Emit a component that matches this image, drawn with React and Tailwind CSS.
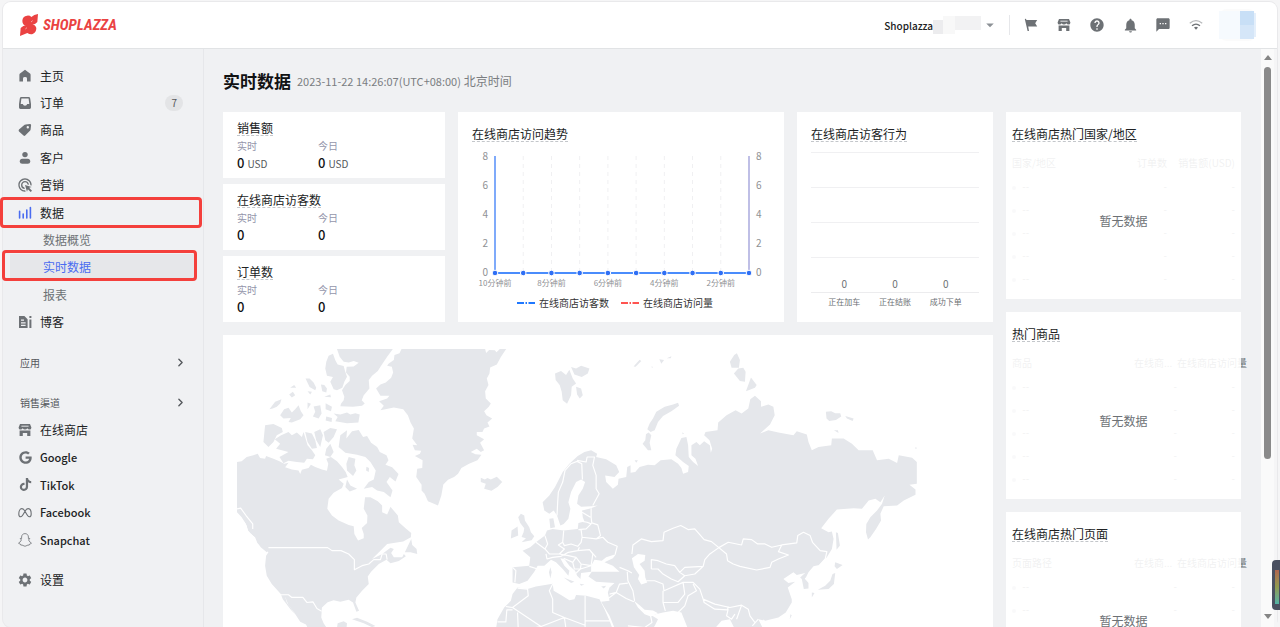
import { ChevronRight } from "lucide-react";
import { FaGoogle, FaTiktok } from "react-icons/fa";
import { MdAdsClick, MdArrowDropDown, MdHelp, MdNotifications, MdSettings, MdSms } from "react-icons/md";

function HomeIcon() {
  return (
    <svg viewBox="0 0 14 14" className="w-3.5 h-3.5" fill="currentColor">
      <path d="M7 .8 12 4.6Q12.6 5 12.6 6V12.6H9V9.4Q9 8 7 8T5 9.4V12.6H1.4V6Q1.4 5 2 4.6Z" />
    </svg>
  );
}

function InboxIcon() {
  return (
    <svg viewBox="0 0 14 14" className="w-3.5 h-3.5" fill="currentColor">
      <path fillRule="evenodd" d="M3.4 1H10.6Q12 1 12.2 2.4L13 8V11.6Q13 13 11.6 13H2.4Q1 13 1 11.6V8L1.8 2.4Q2 1 3.4 1ZM3.4 2.4 2.7 8H4.8Q5.2 9.8 7 9.8T9.2 8H11.3L10.6 2.4Z" />
    </svg>
  );
}

function TagIcon() {
  return (
    <svg viewBox="0 0 14 14" className="w-3.5 h-3.5" fill="currentColor">
      <path fillRule="evenodd" d="M7.6 1.4 11.9 1Q13.2 1 13.1 2.3L12.6 6.6Q12.5 7 12.2 7.4L7.2 12.6Q6.4 13.4 5.5 12.6L1 8.4Q.2 7.5 1 6.6L6.6 1.8Q7 1.5 7.6 1.4ZM9.8 3.1A1.2 1.2 0 1 0 9.8 5.5 1.2 1.2 0 1 0 9.8 3.1Z" />
    </svg>
  );
}

function PersonIcon() {
  return (
    <svg viewBox="0 0 14 14" className="w-3.5 h-3.5" fill="currentColor">
      <circle cx="7" cy="3.6" r="2.7" />
      <rect x="1.8" y="7.8" width="10.4" height="5" rx="2.5" />
    </svg>
  );
}

function DataIcon() {
  return (
    <svg viewBox="0 0 14 14" className="w-3.5 h-3.5" stroke="#4a6cf0" strokeWidth="1.6" strokeLinecap="round">
      <path d="M1.6 5.2V12M5.2 8V12M8.8 4V12M12.4 1.6V12" />
    </svg>
  );
}

function BlogIcon() {
  return (
    <svg viewBox="0 0 14 14" className="w-3.5 h-3.5" fill="currentColor">
      <path fillRule="evenodd" d="M1 1H6.4L9.6 4.2V13H1ZM3 4.6V5.8H6V4.6ZM3 7.2V8.4H7.6V7.2ZM3 9.8V11H7.6V9.8Z" />
      <path d="M11.4 1H13.4V3H11.4ZM11.4 4.4H13.4V13H11.4Z" />
    </svg>
  );
}

function StoreIcon() {
  return (
    <svg viewBox="0 0 14 14" className="w-3.5 h-3.5" fill="currentColor">
      <path d="M2 1H12L13.4 4.4Q13.4 6.6 11.5 6.6 10 6.6 9.3 5.2 8.6 6.6 7 6.6T4.7 5.2Q4 6.6 2.5 6.6 .6 6.6 .6 4.4Z" />
      <path d="M1.6 7.4H4.6L9.2 7.4H12.4V13H9.2V10H4.8V13H1.6Z" />
      <path d="M3.4 3.2H10.6" stroke="#f0f1f3" strokeWidth=".9" />
    </svg>
  );
}

function MetaIcon() {
  return (
    <svg viewBox="0 0 14 14" className="w-3.5 h-3.5" fill="none" stroke="currentColor" strokeWidth="1.1">
      <path d="M7 5.2C6 3.4 5 2.6 3.8 2.6 2 2.6 .8 5.2 .8 8 .8 9.8 1.5 10.8 2.7 10.8 4 10.8 4.8 9.4 7 5.2 8 3.4 9 2.6 10.2 2.6 12 2.6 13.2 5.2 13.2 8 13.2 9.8 12.5 10.8 11.3 10.8 10 10.8 9.2 9.4 7 5.2Z" />
    </svg>
  );
}

function SnapIcon() {
  return (
    <svg viewBox="0 0 14 14" className="w-3.5 h-3.5" fill="none" stroke="currentColor" strokeWidth=".8" strokeLinejoin="round">
      <path d="M7 .6C9 .6 10.4 2 10.4 4V5.6L11.8 5.4 10.6 7Q11.4 9.2 13.5 10 13 11 11.6 11.1L11.2 12.1Q9.8 11.8 9 12.5 7 14 5 12.5 4.2 11.8 2.8 12.1L2.4 11.1Q1 11 .5 10 2.6 9.2 3.4 7L2.2 5.4 3.6 5.6V4C3.6 2 5 .6 7 .6Z" />
    </svg>
  );
}

function FlagIcon() {
  return (
    <svg viewBox="0 0 14 14" className="w-3.5 h-3.5" fill="currentColor">
      <path d="M.8 1 2 .8 2.4 2H13.2L11.2 5.2 13.2 8.6H4.2L5 13H3.6Z" />
    </svg>
  );
}

function WifiIcon() {
  return (
    <svg viewBox="0 0 14 14" className="w-3.5 h-3.5" fill="none" stroke="currentColor" strokeWidth="1.3">
      <path d="M.8 5.2Q7 0 13.2 5.2" opacity=".5" />
      <path d="M3 7.8Q7 4.4 11 7.8" />
      <path d="M5 9.6Q7 8 9 9.6L7 11.8Z" fill="currentColor" stroke="none" />
    </svg>
  );
}

function Logo() {
  return (
    <a href="#" className="flex items-center gap-[5px] text-[#ea4242]">
      <svg viewBox="0 0 54 66" className="h-[22px] w-[18px]" fill="currentColor">
        <path d="M54 0 52 24 46 29Q41 32 36 30 47 33 49 42 49 56 38 60 30 62 22 57L0 66 2 42 10 36Q15 34 19 36 7 33 7 20 8 6 21 5 30 4 34 9L43 3Z" />
        <path d="M33 24 38 20M16 45 21 41" stroke="#fff" strokeWidth="1.5" />
      </svg>
      <span className="font-['Roboto_Condensed','Roboto','Liberation_Sans',sans-serif] text-[15px] leading-5 font-bold italic">SHOPLAZZA</span>
    </a>
  );
}

const mainMenu = [
  { label: "主页", icon: <HomeIcon /> },
  { label: "订单", icon: <InboxIcon />, badge: 7 },
  { label: "商品", icon: <TagIcon /> },
  { label: "客户", icon: <PersonIcon /> },
  { label: "营销", icon: <MdAdsClick size={16} className="shrink-0" /> },
  { label: "数据", icon: <DataIcon />, marked: true },
  { label: "数据概览", sub: true },
  { label: "实时数据", sub: true, active: true },
  { label: "报表", sub: true },
  { label: "博客", icon: <BlogIcon /> },
];

const channels = [
  { label: "在线商店", icon: <StoreIcon /> },
  { label: "Google", icon: <FaGoogle size={13} />, latin: true },
  { label: "TikTok", icon: <FaTiktok size={13} />, latin: true },
  { label: "Facebook", icon: <MetaIcon />, latin: true },
  { label: "Snapchat", icon: <SnapIcon />, latin: true },
];

function MenuItem({ item }) {
  if (item.sub) {
    return (
      <li className="relative flex">
        <a
          href="#"
          className={
            item.active
              ? "flex grow items-center ml-[7px] mr-2 pl-[33px] bg-[#e6e7ea] text-[#4a6cf0]"
              : "flex grow items-center pl-10 text-[#6d7175]"
          }
        >
          {item.label}
        </a>
        {item.active && <span className="absolute -left-px -top-1 bottom-0 right-1.5 rounded-sm border-3 border-[#f4403c]" />}
      </li>
    );
  }
  return (
    <li className="relative flex">
      <a href="#" className="flex grow items-center gap-2 pl-[15px] pr-5 text-[#202223]">
        <span className="flex w-3.5 justify-center text-[#6d7175]">{item.icon}</span>
        <span className={item.latin ? "text-[11px] font-medium" : ""}>{item.label}</span>
        {item.badge && (
          <span className="ml-auto rounded-full bg-[#e3e4e6] px-1.5 text-[10px] leading-4 text-[#55585c]">{item.badge}</span>
        )}
      </a>
      {item.marked && <span className="absolute -left-[3px] -top-0.5 -bottom-0.5 right-px rounded-sm border-3 border-[#f4403c]" />}
    </li>
  );
}

function Sidebar() {
  return (
    <nav className="w-[201px] shrink-0 border-r border-[#e6e7ea] pt-[13px] text-[12px]">
      <ul className="grid h-[274px] auto-rows-fr">
        {mainMenu.map((item) => (
          <MenuItem key={item.label} item={item} />
        ))}
      </ul>
      {["应用", "销售渠道"].map((name) => (
        <button key={name} type="button" className="mt-3 flex h-7 w-full items-center justify-between pl-[17px] pr-4 text-[10px] text-[#55585c]">
          {name}
          <ChevronRight size={13} strokeWidth={2.5} />
        </button>
      ))}
      <ul className="grid h-[138px] auto-rows-fr">
        {channels.map((item) => (
          <MenuItem key={item.label} item={item} />
        ))}
      </ul>
      <ul className="mt-3 grid h-7">
        <MenuItem item={{ label: "设置", icon: <MdSettings size={16} className="shrink-0" /> }} />
      </ul>
    </nav>
  );
}

const tools = [
  { name: "Flag", icon: <FlagIcon /> },
  { name: "Store", icon: <StoreIcon /> },
  { name: "Help", icon: <MdHelp size={16} className="shrink-0" /> },
  { name: "Notifications", icon: <MdNotifications size={17} className="shrink-0" /> },
  { name: "Messages", icon: <MdSms size={16} className="shrink-0" /> },
  { name: "Network", icon: <WifiIcon /> },
];

function Header() {
  return (
    <header className="flex h-[47px] shrink-0 items-center rounded-t-lg border-b border-[#e1e3e5] bg-white pl-[17px] pr-[21px]">
      <Logo />
      <button type="button" className="ml-auto flex items-center text-[10px] font-medium text-[#202223]">
        Shoplazza
        <span className="flex h-[18px] w-12">
          <span className="mt-1 w-2.5 bg-[#ececee]" />
          <span className="w-3 bg-[#f8f8f8]" />
          <span className="mb-1 grow bg-[#f2f2f3]" />
        </span>
        <MdArrowDropDown size={18} className="-mr-1 text-[#8c9196]" />
      </button>
      <span className="mx-3.5 h-5 w-px bg-[#e6e7ea]" />
      <div className="flex items-center gap-[19px] text-[#6d7175]">
        {tools.map((tool) => (
          <button key={tool.name} type="button" aria-label={tool.name} className="flex w-3.5 justify-center">
            {tool.icon}
          </button>
        ))}
      </div>
      <div className="ml-4 flex h-8 items-center rounded-lg bg-[#fbfbfb]">
        <span className="h-7 w-[21px] bg-[#f6fafe]" />
        <span className="flex flex-col">
          <span className="h-3.5 w-3.5 bg-[#c8dff6]" />
          <span className="h-3.5 w-3.5 bg-[#d5e6f8]" />
        </span>
        <span className="h-6 w-0.5 bg-[#e4effb]" />
      </div>
    </header>
  );
}

function CardTitle({ children }) {
  return <h2 className="w-fit border-b border-dashed border-[#c4c7cb] text-[12px] leading-[14px] text-[#202223]">{children}</h2>;
}

function StatCard({ title, unit }) {
  return (
    <section className="h-[66px] bg-white px-3.5 pt-[9px]">
      <CardTitle>{title}</CardTitle>
      <dl className="mt-0.5 grid grid-cols-[81px_1fr]">
        {["实时", "今日"].map((name) => (
          <div key={name}>
            <dt className="text-[10px] leading-4 text-[#9496ab]">{name}</dt>
            <dd className="text-[13px] leading-[18px] font-medium text-[#111213]">
              0{unit && <span className="ml-[3px] text-[10px] font-normal text-[#55585c]">{unit}</span>}
            </dd>
          </div>
        ))}
      </dl>
    </section>
  );
}

function TrendCard() {
  const xs = Array.from({ length: 10 }, (_, i) => 37 + (i * 254) / 9);
  const ticks = [8, 6, 4, 2, 0];
  return (
    <section className="bg-white pt-[15px]">
      <div className="px-3.5">
        <CardTitle>在线商店访问趋势</CardTitle>
      </div>
      <svg viewBox="0 0 326 148" className="mt-1 w-full">
        {xs.slice(1, 9).map((x) => (
          <path key={x} d={`M${x} 10V126`} stroke="#f0f0f2" strokeDasharray="4 4" />
        ))}
        <path d="M37 10V126" stroke="#7faafa" strokeWidth="2" />
        <path d="M291 10V126" stroke="#aaaade" strokeWidth="1.5" />
        <path d="M37 127H291" stroke="#4a8cfc" strokeWidth="2" />
        {xs.map((x) => (
          <circle key={x} cx={x} cy="127" r="2.8" fill="#2f6ff5" stroke="#fff" />
        ))}
        {ticks.map((t, i) => (
          <g key={t} fontSize="10" fill="#8f9194">
            <text x="30" y={14 + i * 29} textAnchor="end">{t}</text>
            <text x="298" y={14 + i * 29}>{t}</text>
          </g>
        ))}
        {[10, 8, 6, 4, 2].map((m, i) => (
          <text key={m} x={xs[i * 2]} y="140" fontSize="8" fill="#8f9194" textAnchor="middle">{m}分钟前</text>
        ))}
      </svg>
      <div className="mt-px flex justify-center gap-3 pr-3 text-[10px] leading-4 text-[#333]">
        <span className="flex items-center gap-1">
          <svg viewBox="0 0 18 2" className="h-0.5 w-[18px]"><path d="M0 1H7M8.5 1H10M11.5 1H18" stroke="#1f78ff" strokeWidth="2" /></svg>
          在线商店访客数
        </span>
        <span className="flex items-center gap-1">
          <svg viewBox="0 0 18 2" className="h-0.5 w-[18px]"><path d="M0 1H7M8.5 1H10M11.5 1H18" stroke="#ff5450" strokeWidth="2" /></svg>
          在线商店访问量
        </span>
      </div>
    </section>
  );
}

function BehaviorCard() {
  return (
    <section className="bg-white px-3.5 pt-[15px]">
      <CardTitle>在线商店访客行为</CardTitle>
      <div className="mt-2.5">
        {[1, 2, 3, 4].map((n) => (
          <div key={n} className="h-[35px] border-t border-[#f0f0f2]" />
        ))}
      </div>
      <div className="-mt-3.5 grid grid-cols-3 border-b border-[#ececee] px-2 pb-0.5 text-center text-[10px] leading-3 text-[#6d7175]">
        <span>0</span>
        <span>0</span>
        <span>0</span>
      </div>
      <div className="mt-[3px] grid grid-cols-3 px-2 text-center text-[8px] leading-3 text-[#6d7175]">
        <span>正在加车</span>
        <span>正在结账</span>
        <span>成功下单</span>
      </div>
    </section>
  );
}

const rankings = [
  { title: "在线商店热门国家/地区", cols: ["国家/地区", "订单数", "销售额(USD)"] },
  { title: "热门商品", cols: ["商品", "在线商...", "在线商店访问量"], wide: true },
  { title: "在线商店热门页面", cols: ["页面路径", "在线商...", "在线商店访问量"], wide: true },
];

function RankingCard({ title, cols, wide }) {
  return (
    <section className="shrink-0 bg-white pt-[15px]">
      <div className="px-1.5">
        <CardTitle>{title}</CardTitle>
      </div>
      <div className="relative px-1.5 pt-2 pb-2.5">
        <table className="w-full table-fixed text-[10px] text-[#6d7175]">
          <thead>
            <tr className="h-6">
              <th className="text-left font-normal">{cols[0]}</th>
              <th className={wide ? "w-[43px] whitespace-nowrap text-left font-normal" : "w-[43px] text-right font-normal"}>{cols[1]}</th>
              <th className={wide ? "w-[58px] whitespace-nowrap text-left font-normal" : "w-[68px] whitespace-nowrap text-right font-normal"}>{cols[2]}</th>
            </tr>
          </thead>
          <tbody>
            {[1, 2, 3, 4, 5].map((n) => (
              <tr key={n} className="h-[23px]">
                <td><span className="mr-1 inline-block h-1 w-1 rounded-full bg-[#c4c7cb]" /> --</td>
                <td className="text-right">-</td>
                <td className="text-right">-</td>
              </tr>
            ))}
          </tbody>
        </table>
        <div className="absolute inset-0 flex items-center justify-center bg-white/90 text-[12px] text-[#6d7175]">暂无数据</div>
      </div>
    </section>
  );
}

// Coordinates are three units to the pixel; each group covers one part of the world.
function WorldMap() {
  return (
    <svg viewBox="0 0 2034 900" className="w-11/12" fill="#e5e7eb" stroke="none">
      <g transform="translate(-51 -42)">
        <path d="M350 42H517L500 65 490 80 480 95 472 108 455 122 445 135 447 160 430 180 424 195 433 205 425 212 398 215 360 213 362 206 370 195 372 185 365 165 375 150 388 138 388 125 377 112 379 95 400 94 415 83 400 78 385 82 370 80 358 65Z" />
        <path d="M325 62L338 56 345 76 352 88 370 93 374 108 380 125 372 140 366 158 350 165 340 162 330 140 338 126 320 122 315 100 318 80Z" />
        <path d="M543 42H793L796 54 805 45 822 46 827 52 837 42H856L840 66 828 88 808 97 806 115 798 130 803 150 793 168 795 190 810 205 804 215 790 228 797 240 814 250 800 262 806 274 790 280 785 290 768 290 768 300 790 312 778 322 790 345 780 350 768 340 750 350 764 357 782 358 770 375 745 385 722 398 712 415 700 425 682 433 668 447 662 480 652 510 640 505 622 497 612 475 603 465 603 448 587 425 590 400 605 398 606 375 583 362 598 355 602 346 583 345 576 328 590 330 575 310 580 280 570 262 562 240 548 222 520 217 480 225 490 212 476 198 500 190 507 182 480 182 467 160 480 148 496 142 512 128 518 112 514 95 500 92 504 86 520 75 522 60 537 55Z" />
        <path d="M51 380L65 378 80 365 100 360 113 355 120 368 135 370 138 362 160 370 178 378 192 385 205 382 195 396 215 402 235 405 240 416 245 403 265 398 272 388 285 395 305 402 320 406 324 385 318 370 332 365 350 378 365 395 376 410 382 425 355 432 370 445 365 458 340 472 325 490 321 520 335 540 355 555 385 568 400 572 402 595 413 615 430 608 430 595 424 577 440 562 441 540 430 520 434 485 450 485 472 497 485 510 485 530 500 537 510 514 520 526 532 540 535 560 555 578 572 592 571 605 548 618 500 625 480 645 455 670 485 655 510 636 520 640 512 652 520 665 545 665 550 655 556 662 535 676 510 683 498 672 475 685 452 708 442 722 445 745 425 765 408 785 405 800 416 825 408 828 398 800 385 792 360 798 340 793 322 799 305 815 303 845 310 862 322 880 330 930H300L262 876 255 860 240 845 215 812 195 783 200 800 225 835 212 822 188 790 182 775 155 745 140 720 135 690 138 660 145 650 125 635 112 622 105 605 85 590 80 570 65 545 51 530Z" />
        <path d="M195 783L218 800 245 840 262 868 240 858 222 830 205 808Z" />
        <path d="M135 270L160 266 185 278 188 290 170 300 160 320 145 335 130 320Z" />
        <path d="M183 300L205 290 215 300 230 292 245 305 250 290 256 310 262 330 275 345 285 360 278 372 260 370 252 382 230 380 205 376 190 384 178 365 205 350 185 345 168 340 180 325 164 312Z" />
        <path d="M360 300L380 285 378 310 395 288 415 284 428 305 440 302 452 322 470 335 478 350 498 360 504 375 495 388 515 396 534 416 525 438 508 425 498 440 516 465 510 485 490 470 470 465 455 455 430 460 445 440 460 432 466 405 450 380 435 365 410 358 375 352 355 335Z" />
        <path d="M385 365L405 370 402 390 408 405 398 422 380 405 378 385ZM380 432 390 450 410 460 388 468 375 455ZM438 394 446 398 445 410 437 405Z" />
        <path d="M310 290L330 278 350 282 340 305 325 322 315 315ZM318 340 330 325 340 350 330 365 314 360ZM282 290 300 282 308 300 300 335 288 315ZM255 290 275 295 285 315 290 338 275 340 262 320Z" />
        <path d="M340 235L360 238 380 232 390 238 405 234 418 238 414 262 380 264 345 258 352 245ZM316 204 335 215 332 228 316 222ZM318 244 335 248 334 260 316 256ZM280 214 300 210 304 235 295 250 278 244 285 230ZM180 240 192 222 205 218 215 232 225 222 235 210 242 228 250 240 240 252 215 262 205 260 212 248 190 250Z" />
        <path d="M148 222L165 200 184 192 180 205 170 215 158 220ZM207 178 218 170 225 180 215 187ZM210 158 222 150 228 158ZM256 130 268 130 280 142 288 158 285 165 268 156ZM302 148 312 150 320 160 318 172 306 168ZM262 168 275 170 270 178ZM312 185 330 178 332 186ZM262 202 272 206 262 222Z" />
        <path d="M780 427L792 432 800 428 810 432 828 424 844 440 830 455 812 466 790 460 795 445 780 440ZM553 650 572 610 575 628 588 640 590 655 570 650ZM350 876 352 862 370 856 380 862 378 880ZM395 850 410 846 440 858 465 870 455 874 430 862Z" />
        <path fill="#fff" d="M51 534 62 545 76 562 84 585 104 606 110 622 98 606 80 592 64 560 51 548Z" />
        <path d="M70 545 80 552 78 562ZM82 572 94 585 92 594ZM112 620 130 628 146 642 140 650 122 635Z" />
      </g>

      <g transform="translate(729 -42)">
        <path d="M222 115L240 108 255 120 265 104 275 130 285 145 272 155 270 180 258 206 245 195 242 170 236 150 224 135ZM270 96 285 100 300 92 325 100 320 115 302 126 280 118ZM285 155 300 160 305 180 296 190 288 178Z" />
        <path d="M457 94L475 74 480 78 463 95ZM534 73 548 75 540 86ZM556 70 570 64 568 70ZM510 94 516 96 512 98Z" />
        <path d="M590 203L593 212 570 228 545 242 530 260 520 285 508 290 498 282 505 265 515 250 525 230 550 215 575 208ZM502 292 510 300 505 322 510 345 500 345 484 325 492 315 494 297Z" />
        <path d="M120 535L130 540 132 555 145 575 150 590 160 602 152 614 122 620 135 608 122 604 128 590 130 578 118 562 112 545ZM92 585 110 573 112 600 90 609ZM208 695 212 710 208 728 204 710Z" />
        <path d="M185 500L205 480 222 455 245 410 265 385 290 362 310 350 330 345 348 355 345 365 375 372 405 390 414 410 400 425 372 420 375 440 395 460 410 448 412 430 435 425 438 395 448 390 448 412 462 410 475 395 500 388 520 390 538 375 570 372 590 385 600 398 605 415 620 410 622 392 605 380 582 360 585 340 600 308 615 305 620 330 622 365 635 380 650 392 642 370 630 360 630 330 645 320 655 330 668 318 685 330 688 352 692 340 684 315 668 300 672 290 708 285 710 262 735 240 762 225 780 235 800 220 806 192 820 182 838 198 838 215 860 208 875 215 879 240 865 268 835 295 860 285 890 292 935 300 945 288 975 298 980 320 990 345 1010 335 1048 330 1050 310 1085 310 1110 325 1130 345 1172 345 1185 375 1220 370 1245 383 1250 360 1290 367 1304 380V445L1282 448 1300 462 1300 478 1265 495 1245 510 1205 512 1195 535 1197 555 1182 580 1165 605 1158 612 1152 590 1153 565 1165 545 1185 525 1200 505 1208 480 1195 500 1180 490 1160 495 1140 520 1115 518 1065 522 1040 550 1018 578 1040 590 1050 588 1055 610 1050 640 1035 665 1012 688 995 692 980 710 970 730 980 742 980 758 966 760 960 730 955 725 970 712 945 718 935 710 905 730 920 742 940 738 918 755 930 790 930 800 912 830 890 845 850 855 830 850 845 880V930H640L600 830 575 825 545 830 510 838 530 850 520 870 500 900H420L400 876 385 840 370 815 360 798 385 795 380 770 385 755 400 742 345 738 322 722 332 708 415 708 395 690 370 680 395 668 405 655 375 665 362 675 340 672 330 690 330 708 300 712 298 730 288 720 282 705 265 690 250 670 238 668 250 690 265 705 262 720 245 700 225 680 210 672 190 690 170 690 160 708 140 735 115 745 95 740 95 695 145 690 148 665 125 645 148 635 165 620 192 600 198 585 215 580 248 585 290 580 292 562 310 558 305 545 303 525 330 518 350 510 330 512 300 514 288 505 292 480 305 460 312 440 300 432 285 440 270 470 262 500 268 520 262 550 248 565 238 570 228 540 218 525 205 535 190 525Z" />
        <path d="M205 550L217 548 222 575 208 578ZM248 725 280 738 270 742ZM360 752 375 750 368 758ZM296 744 310 746 300 750Z" />
        <path d="M110 755L140 760 165 752 215 744 218 765 240 778 265 793 280 790 285 778 315 780 355 790 370 820 385 855 402 900V930H30L46 876 50 850 70 815 90 795 95 775Z" />
        <path d="M745 80L758 60 766 55 775 75 772 98 750 98ZM757 115 770 100 785 98 792 110 790 140 775 138ZM793 168 808 127 825 150 820 158Z" />
        <path d="M1032 230L1048 228 1060 234 1075 234 1078 244 1062 254 1042 257 1034 250ZM1090 242 1115 250 1112 257 1095 250ZM1056 285 1068 285 1070 293ZM1300 335 1305 338 1300 342ZM460 375 470 375 465 382ZM602 292 608 294 604 297Z" />
        <path d="M1062 590L1068 592 1074 630 1064 642ZM1060 680 1082 688 1065 700 1058 692ZM1060 712 1056 745 1040 760 1008 762 1030 750 1045 735 1052 715ZM990 770 998 772 990 785ZM926 835 930 838 924 850Z" />
        <path fill="#fff" d="M452 668L470 655 492 658 490 675 475 685 490 705 492 725 498 740 480 746 470 730 474 718 458 695ZM458 795 475 808 490 822 515 824 530 832 508 842 490 835 470 815ZM720 855 745 850 760 880V930H690L698 880Z" />
      </g>

      <g fill="none" stroke="#fff" strokeWidth="3.5" strokeLinejoin="round">
        <g transform="translate(-51 -42)">
          <path d="M145 636H322L335 645 362 645 385 655 402 672 402 702 425 690 445 685 460 672 480 672 485 655 497 655 500 672M182 777 205 777 215 785 248 785 260 800 278 798 290 818 304 826M51 520 62 518 78 540 98 565 98 580" />
        </g>
        <g transform="translate(729 -42)">
          <path d="M228 540L230 500 232 470 245 440 252 405 270 385 288 378 302 385 304 432M288 375 315 380 318 365 340 365 335 390 345 420 345 460 354 475 335 510M330 518 330 545 332 562 350 568 358 600 345 610 303 605 300 582M303 530 328 545M295 556 318 560 330 565 315 580 292 582M345 610 365 605 380 620 408 632 402 655M248 585 245 620 250 630 270 625 290 632 300 620 303 605M192 600 200 625 192 640 205 655 235 655 250 640 232 628 245 620M195 655 198 670 215 665 240 662 262 650 290 645 295 635M165 620 192 640M235 655 262 660 285 665 275 680 248 668M290 645 325 642 335 655 330 690 300 685 285 665M275 680 280 700 298 700 330 690M300 685 298 700 282 715M95 695 105 705 102 740M145 692 170 700M325 642 345 665" />
          <path d="M452 655L455 628 480 610 510 618 545 615 548 590 575 578 598 570 620 582 640 580 668 612 690 618 712 636 740 620 780 628 785 610 810 612 828 625 850 625 870 635 900 628 945 622 948 600 965 590 985 600 992 620 1015 645 1035 648 1030 670 1012 690M712 636 735 655 738 675 755 685 775 692 825 703 865 695 870 680 890 670 920 658 890 648 900 628M712 636 685 655 670 672 665 692 610 695 595 710 580 690 555 685 530 675 510 672 510 700M665 692 640 715 610 720 595 710M510 700 530 700 545 715 570 730 590 738 610 720M495 735 520 735 545 745 548 765 570 755 605 740 635 740 655 760 665 790 700 805 745 815 780 808 800 820 805 840 820 860M545 765 545 800 552 825M605 740 610 775 590 800 545 800M635 745 645 765 620 780 610 810 590 830M665 790 668 800 700 820 738 822 740 812M740 820 735 840 750 850 760 835M780 808 765 850" />
          <path d="M438 708L440 735 455 765 460 795M415 695 440 705 452 712M385 775 405 770 415 745 440 742M370 795 385 785 405 770 435 788 458 798M110 757 140 760 142 780 95 815 75 812M95 815 180 872 250 845 312 868M215 745 205 765 215 790 215 830 250 845M312 780V855H390M312 855V876M50 858H75L78 822 95 822M110 830 112 880M160 876 180 872M970 730 985 718 1000 715M830 850 812 870M845 852 858 870 880 862M508 840 512 860 490 875 440 870M250 845 255 880" />
        </g>
      </g>
    </svg>
  );
}

function Scrollbar() {
  return (
    <div className="flex w-[13px] shrink-0 flex-col items-center bg-[#fafafa] pt-1.5 pb-1 text-[#858585]">
      <svg viewBox="0 0 8 5" className="h-[5px] w-2" fill="currentColor"><path d="M0 5 4 0 8 5Z" /></svg>
      <span className="mt-[7px] h-[69%] w-[7px] rounded-full bg-[#8a8a8a]" />
      <svg viewBox="0 0 8 5" className="mt-auto mb-1 h-[5px] w-2" fill="currentColor"><path d="M0 0 4 5 8 0Z" /></svg>
    </div>
  );
}

export default function App() {
  return (
    <div className="relative h-screen overflow-hidden bg-[#f5f5f6] px-[3px] pt-0.5 font-['Noto_Sans_CJK_SC','Open_Sans',sans-serif]">
      <div className="flex h-full flex-col rounded-lg bg-[#f0f1f3] ring-1 ring-[#e9e9eb]">
        <Header />
        <div className="flex min-h-0 grow">
          <Sidebar />
          <main className="min-w-0 grow overflow-hidden pt-5 pl-[19px] pr-5">
            <div className="flex items-center gap-1.5">
              <h1 className="text-[17px] leading-6 font-bold text-[#111213]">实时数据</h1>
              <p className="text-[12px] leading-6 text-[#7a7d81]">
                <span className="text-[11px]">2023-11-22 14:26:07(UTC+08:00)</span> 北京时间
              </p>
            </div>
            <div className="mt-[19px] flex items-start gap-[13px]">
              <div className="flex min-w-0 grow flex-col gap-[13px]">
                <div className="grid grid-cols-[222fr_326fr_196fr] gap-[13px]">
                  <div className="flex flex-col gap-1.5">
                    <StatCard title="销售额" unit="USD" />
                    <StatCard title="在线商店访客数" />
                    <StatCard title="订单数" />
                  </div>
                  <TrendCard />
                  <BehaviorCard />
                </div>
                <section className="bg-white p-3.5">
                  <WorldMap />
                </section>
              </div>
              <div className="flex w-[235px] shrink-0 flex-col gap-[13px]">
                {rankings.map((r) => (
                  <RankingCard key={r.title} {...r} />
                ))}
              </div>
            </div>
          </main>
          <Scrollbar />
          <div className="w-[3px] shrink-0 bg-[#f5f5f6]" />
        </div>
      </div>
      <div className="absolute right-0 bottom-[17px] h-[50px] w-2 rounded-l bg-[#4a5060] pt-2.5 pb-1.5 pl-[3px]">
        <div className="h-full w-1 bg-linear-to-b from-[#b0654f] via-[#8f9a4f] to-[#4fb3a5]" />
      </div>
    </div>
  );
}
